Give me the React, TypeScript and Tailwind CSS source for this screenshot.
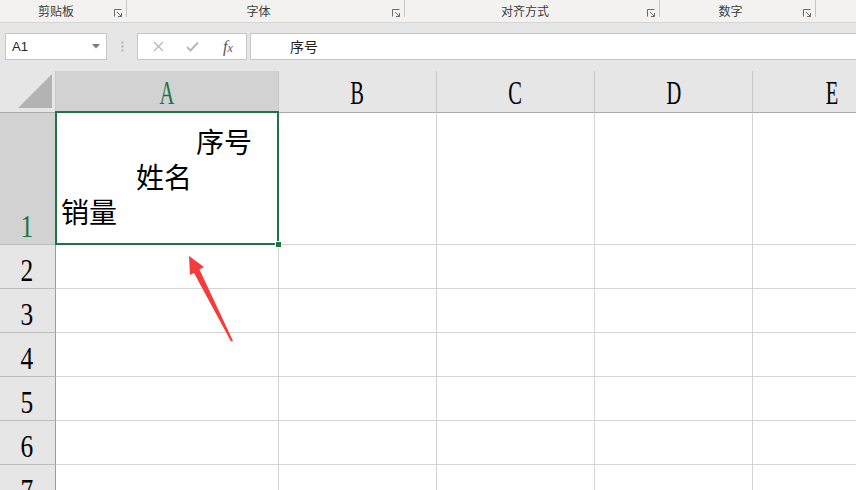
import React from "react";

const serif = { fontFamily: '"Liberation Serif", "Times New Roman", serif' };
const cjk = { fontFamily: '"Noto Sans CJK SC", "Noto Sans", sans-serif' };

function Launcher() {
  return (
    <svg width="9" height="9" viewBox="0 0 9 9" className="block">
      <path d="M0.5 7.5 V0.5 H7.5" fill="none" stroke="#6b6b6b" strokeWidth="1" />
      <path d="M3 3 L7.5 7.5 M4 7.5 H7.5 V4" fill="none" stroke="#6b6b6b" strokeWidth="1" />
    </svg>
  );
}

function Group({ label, width, grow }: { label: string; width?: number; grow?: boolean }) {
  return (
    <div
      className={`relative flex h-full items-start ${grow ? "flex-1" : ""}`}
      style={width ? { width } : undefined}
    >
      <div className="flex h-full flex-1 items-center justify-center pb-[1px] pr-[14px] text-[12px] text-[#3c3c3c]" style={cjk}>
        {label}
      </div>
      {!grow && (
        <>
          <div className="absolute right-[4px] top-[9px]">
            <Launcher />
          </div>
          <div className="h-[17px] w-px bg-[#c6c6c6]" />
        </>
      )}
    </div>
  );
}

function ColHeader({ label, selected, last }: { label: string; selected?: boolean; last?: boolean }) {
  return (
    <div
      className={`flex items-center justify-center border-b border-b-[#ababab] ${last ? "" : "border-r border-r-[#c9c9c9]"} ${selected ? "bg-[#d2d2d2]" : "bg-[#e6e6e6]"}`}
    >
      <span
        className={`inline-block scale-x-[0.62] pt-[4px] text-[33px] leading-none ${selected ? "text-[#217346]" : "text-black"}`}
        style={serif}
      >
        {label}
      </span>
    </div>
  );
}

function RowHeader({ n, selected }: { n: number; selected?: boolean }) {
  return (
    <div
      className={`flex items-end justify-center border-b border-r border-b-[#bdbdbd] border-r-[#9c9c9c] pb-[2px] ${selected ? "bg-[#d2d2d2]" : "bg-[#e6e6e6]"}`}
    >
      <span
        className={`inline-block scale-x-[0.82] pr-[2px] text-[31px] leading-none ${selected ? "text-[#217346]" : "text-black"}`}
        style={serif}
      >
        {n}
      </span>
    </div>
  );
}

function Cell() {
  return <div className="border-b border-r border-[#d4d4d4] bg-white" />;
}

export default function App() {
  const rows = [2, 3, 4, 5, 6, 7];
  return (
    <div className="relative h-[490px] w-[856px] overflow-hidden bg-white">
      {/* Ribbon group labels */}
      <div className="flex h-[23px] border-b border-[#d5d5d5] bg-[#f3f2f1]">
        <Group label="剪贴板" width={127} />
        <Group label="字体" width={278} />
        <Group label="对齐方式" width={255} />
        <Group label="数字" width={156} />
        <Group grow label="" />
      </div>

      {/* Formula bar area */}
      <div className="flex h-[48px] items-start bg-[#e6e6e6] pl-[5px] pt-[10px]">
        <div className="flex h-[27px] w-[102px] items-center justify-between border border-[#c6c6c6] bg-white pl-[6px] pr-[6px]">
          <span className="text-[13px] text-[#262626]" style={{ fontFamily: '"Liberation Sans", Arial, sans-serif' }}>
            A1
          </span>
          <svg width="8" height="5" viewBox="0 0 8 5">
            <path d="M0 0 H8 L4 4.5 Z" fill="#7a7a7a" />
          </svg>
        </div>
        <div className="flex h-[27px] w-[30px] items-center justify-center">
          <svg width="3" height="12" viewBox="0 0 3 12">
            <rect x="0.5" y="0.5" width="2" height="2" fill="#b3b3b3" />
            <rect x="0.5" y="4.5" width="2" height="2" fill="#b3b3b3" />
            <rect x="0.5" y="8.5" width="2" height="2" fill="#b3b3b3" />
          </svg>
        </div>
        <div className="flex h-[27px] w-[110px] items-center border border-[#c6c6c6] bg-white">
          <div className="flex w-[38px] justify-center pl-[2px]">
            <svg width="11" height="11" viewBox="0 0 11 11">
              <path d="M1 1 L10 10 M10 1 L1 10" stroke="#b9b9b9" strokeWidth="1.4" />
            </svg>
          </div>
          <div className="flex w-[32px] justify-center">
            <svg width="13" height="11" viewBox="0 0 13 11">
              <path d="M1 6 L4.5 9.5 L12 1.5" fill="none" stroke="#b9b9b9" strokeWidth="2" />
            </svg>
          </div>
          <div className="flex w-[36px] justify-center pl-[4px]">
            <span className="text-[16px] italic leading-none text-[#555]" style={serif}>
              f<span className="text-[12px]">x</span>
            </span>
          </div>
        </div>
        <div className="ml-[3px] flex h-[27px] flex-1 items-center border border-r-0 border-[#c6c6c6] bg-white pl-[39px]">
          <span className="text-[14px] text-[#222]" style={cjk}>
            序号
          </span>
        </div>
      </div>

      {/* Grid */}
      <div className="grid grid-cols-[56px_223px_158px_158px_158px_158px] grid-rows-[42px_132px_44px_44px_44px_44px_44px_44px]">
        {/* corner */}
        <div className="flex items-end justify-end border-b border-r border-b-[#ababab] border-r-[#c9c9c9] bg-[#e6e6e6] pb-[4px] pr-[3px]">
          <svg width="34" height="34" viewBox="0 0 34 34">
            <path d="M34 0 V34 H0 Z" fill="#b3b3b3" />
          </svg>
        </div>
        <ColHeader label="A" selected />
        <ColHeader label="B" />
        <ColHeader label="C" />
        <ColHeader label="D" />
        <ColHeader label="E" last />

        {/* row 1 */}
        <RowHeader n={1} selected />
        <div className="relative border-b border-r border-[#d4d4d4] bg-white">
          <div className="flex flex-col pt-[10px] text-[28px] leading-[36px] text-black" style={cjk}>
            <div className="ml-[140px]">序号</div>
            <div className="ml-[80px] -mt-[1px]">姓名</div>
            <div className="ml-[5px] -mt-[1px]">销量</div>
          </div>
          <div className="pointer-events-none absolute -left-[1px] -top-[2px] -bottom-[1px] -right-[1px] border-2 border-[#217346]" />
          <div className="absolute -bottom-[4px] -right-[4px] h-[7px] w-[7px] border border-white bg-[#217346]" />
        </div>
        <Cell />
        <Cell />
        <Cell />
        <Cell />

        {rows.map((n) => (
          <React.Fragment key={n}>
            <RowHeader n={n} />
            <Cell />
            <Cell />
            <Cell />
            <Cell />
            <Cell />
          </React.Fragment>
        ))}
      </div>

      {/* Red annotation arrow */}
      <svg className="pointer-events-none absolute left-0 top-0" width="856" height="490" viewBox="0 0 856 490">
        <path d="M189 256 L204 267 L199.5 269.5 L233 341 L231 341.5 L194 273 L190 275 Z" fill="#f43c3c" />
      </svg>
    </div>
  );
}
